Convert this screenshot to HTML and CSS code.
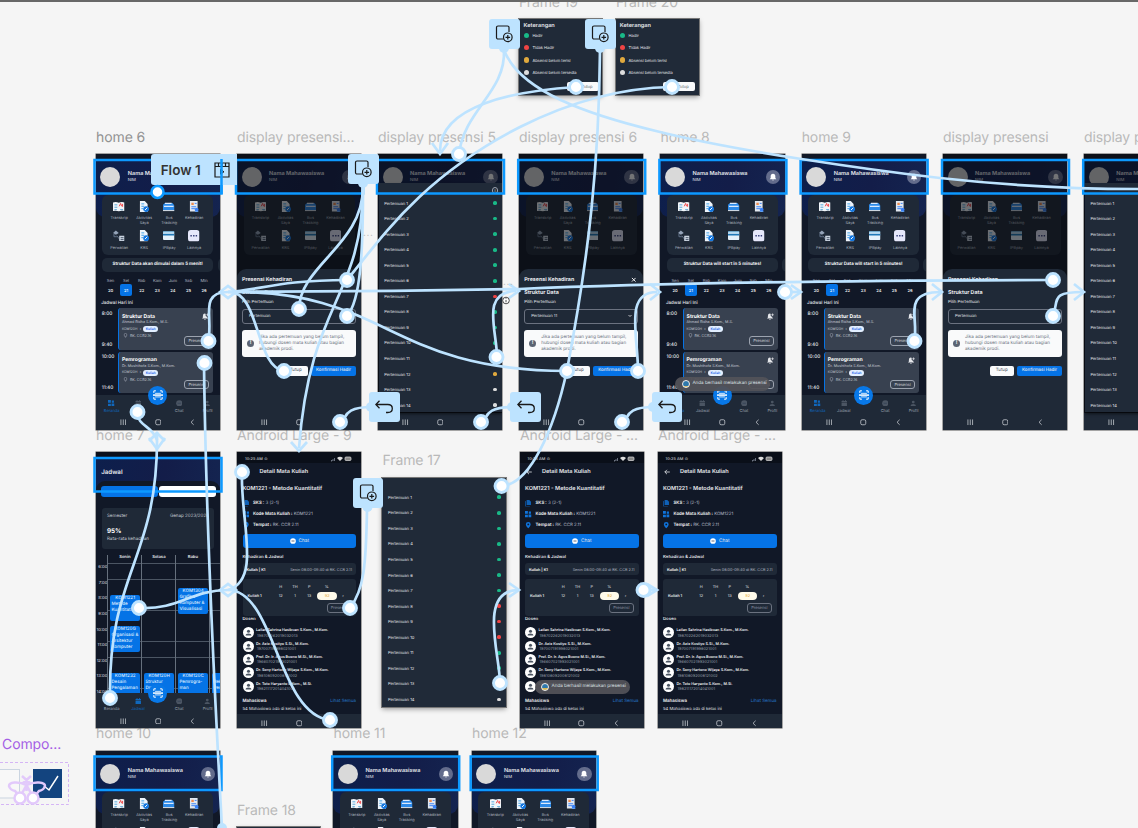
FILE: index.html
```html
<!DOCTYPE html>
<html lang="id">
<head>
<meta charset="utf-8">
<title>Prototype canvas</title>
<link rel="stylesheet" href="styles.css">
</head>
<body>
<svg class="defs" width="0" height="0">
  <symbol id="i-book" viewBox="0 0 12 12"><path d="M0 1.5q3-1 6 .3 3-1.300 6-.3v9q-3-1-6 .3-3-1.300-6-.3z" fill="#f1f5f9"/><path d="M1.500 4h3M1.500 6.500h3M1.500 9h2.500M7.500 9h3" stroke="#55a5d8"/><path d="M6.500 5.500 8 2.500l1 3M10 3v3" stroke="#ef4444" fill="none"/></symbol>
  <symbol id="i-doc" viewBox="0 0 12 12"><path d="M2 0h5l3 3v9H2z" fill="#eef4fb"/><path d="M3.500 3h3M3.500 5.500h3M3.500 8h2" stroke="#3b9fe8"/><circle cx="8.500" cy="8.500" r="3" fill="#1477e0"/><path d="m7.200 9.500 2.500-2.500" stroke="#fff"/></symbol>
  <symbol id="i-bus" viewBox="0 0 12 12"><path d="M2 2h8l2 3v5H0V4z" fill="#2d8ae8"/><path d="M1 5.500h10M2 2.500h7" stroke="#dbeafe" stroke-width="1.300"/><path d="M0 10h12" stroke="#e5e7eb"/></symbol>
  <symbol id="i-list" viewBox="0 0 12 12"><path d="M2 0h8v11H2z" fill="#e2e8f0"/><path d="M3.500 3h2.500" stroke="#ef8a4c" stroke-width="2.500"/><path d="M7 2.500h2M3.500 6h5M3.500 8h4" stroke="#3b82f6"/><circle cx="9" cy="9" r="2" fill="#3b82f6"/><path d="M6 12q3-3 6 0z" fill="#60a5fa"/></symbol>
  <symbol id="i-guide" viewBox="0 0 12 12"><path d="M0 3 3 .5 6 3 3 5z" fill="#94a3b8"/><path d="M1 4v3h3M4 6l4 5" stroke="#64748b" fill="none"/><path d="M6.500 6H12v5.500H6.500z" fill="#cbd5e1"/><path d="M8 8h3M8 10h3" stroke="#475569"/></symbol>
  <symbol id="i-card" viewBox="0 0 12 12"><rect y="1.500" width="12" height="9" rx="1" fill="#e5f1fb"/><path d="M0 4.800h12" stroke="#1f78b8" stroke-width="2"/><path d="M0 2h12" stroke="#68bdee"/></symbol>
  <symbol id="i-more" viewBox="0 0 12 12"><rect width="12" height="12" rx="3" fill="#e6e8fb"/><path d="M2.500 6h1.500M5.300 6h1.500M8 6h1.500" stroke="#343c78" stroke-width="1.500"/></symbol>
  <symbol id="i-bell" viewBox="0 0 12 12"><path d="M6 1q3.500 0 3.500 4v2.500L11 9.500H1l1.500-2V5Q2.500 1 6 1z" fill="currentColor"/><path d="M4.500 10h3v1h-3z" fill="currentColor"/></symbol>
  <symbol id="i-ring" viewBox="0 0 12 12"><path d="M5 1q1 0 1.500.5Q5 5 9 6.500v1l1.500 2H0l1.500-2V5Q1.500 1 5 1zM3.500 10.200h3v1h-3z" fill="#e5e7eb"/><path d="M9.500.8v4.400M7.300 3h4.400" stroke="#e5e7eb" stroke-width="1.200"/></symbol>
  <symbol id="i-scan" viewBox="0 0 12 12"><path d="M1 3.500V1h2.500M8.500 1H11v2.500M11 8.500V11H8.500M3.500 11H1V8.500" fill="none" stroke="#fff" stroke-width="1.200"/><path d="M2.500 4h7M2.500 8.300h7" stroke="#fff"/><path d="M0 6.100h12" stroke="#fff" stroke-width="1.800"/></symbol>
  <symbol id="i-user" viewBox="0 0 12 12"><circle cx="6" cy="3.800" r="2.600" fill="currentColor"/><path d="M1 11q0-3.500 5-3.500t5 3.500z" fill="currentColor"/></symbol>
  <symbol id="i-grid" viewBox="0 0 12 12"><path d="M0 0h5.300v5.300H0zM7 1h4v4H7zM0 7h5.300v5H0zM6.500 6.500H12V12H6.500z" fill="currentColor"/></symbol>
  <symbol id="i-cal" viewBox="0 0 12 12"><path d="M1 2h2V0h1.500v2h3V0H9v2h2v2H1zM1 5h10v7H1z" fill="currentColor"/></symbol>
  <symbol id="i-file" viewBox="0 0 12 12"><path d="M3 0h5l3 3v6H3z" fill="currentColor" opacity=".8"/><path d="M1 2v10h8" fill="none" stroke="currentColor" stroke-width="1.500" opacity=".7"/></symbol>
  <symbol id="i-chat" viewBox="0 0 12 12"><circle cx="6" cy="6" r="5.700" fill="currentColor"/><path d="M3 6h6" stroke="#334155" stroke-width="1.500"/></symbol>
  <symbol id="i-pin" viewBox="0 0 12 12"><path d="M6 12Q1.500 7 1.500 4.500a4.500 4.500 0 0 1 9 0Q10.500 7 6 12z" fill="currentColor"/><circle cx="6" cy="4.500" r="1.700" fill="#111827"/></symbol>
  <symbol id="i-overlay" viewBox="0 0 18 18"><path d="M8.500 14H3a1.500 1.500 0 0 1-1.500-1.500V2.500A1.500 1.500 0 0 1 3 1h9.500A1.500 1.500 0 0 1 14 2.500V7" fill="none" stroke="#1a1a1a" stroke-width="1.200"/><circle cx="12.800" cy="12.300" r="4.300" fill="#bde3ff" stroke="#1a1a1a" stroke-width="1.200"/><path d="M12.800 10v4.600M10.500 12.300h4.600" stroke="#1a1a1a" stroke-width="1.200"/></symbol>
  <symbol id="i-back" viewBox="0 0 18 14"><path d="M4.500.8.800 4.500l3.700 3.700M.8 4.500h12q4.500 0 4.500 4t-4.500 4H11" fill="none" stroke="#1a1a1a" stroke-width="1.300"/></symbol>
  <symbol id="i-flow" viewBox="0 0 16 16"><path d="M1 1h14v14H1zM1 4.500h14M4.500 1v3.500M8 1v3.500M11.500 1v3.500" fill="none" stroke="#1a1a1a" stroke-width="1.200"/><path d="M6.500 7.500 10 9.800l-3.500 2.300z" fill="none" stroke="#1a1a1a"/></symbol>
</svg>
<main class="canvas" id="canvas"></main>
<script src="app.js"></script>
</body>
</html>
```

FILE: styles.css
```css
* { box-sizing: border-box; }
body { margin: 0; overflow: hidden; background: #f5f5f5; font-family: Inter, "Noto Sans", sans-serif; }
.defs { position: absolute; }
.canvas { position: relative; width: 1138px; height: 828px; overflow: hidden; }
.topbar { position: absolute; left: 0; top: 0; width: 100%; height: 2px; background: #686868; }
.label { position: absolute; height: 18px; line-height: 18px; font-size: 14px; letter-spacing: -.1px; color: #b9b9b9; white-space: nowrap; text-rendering: geometricPrecision; }
.label.strong { color: #929292; }
.label.purple { color: #a45ee5; }

/* Device frames */
.frame { position: absolute; width: 124.300px; height: 276px; overflow: hidden; background: #111827; color: #e5e7eb; font-size: 4.200px; line-height: 5px; box-shadow: 0 0 0 .5px #555; text-rendering: geometricPrecision; }
.frame svg, .frame i { display: block; flex: none; }
.body { position: relative; height: 241px; overflow: hidden; }
.navy { position: absolute; left: 0; top: 5px; width: 100%; height: 58px; border-radius: 0 0 9px 9px; background: linear-gradient(100deg, #0d1f4c, #131d49 55%, #142450); }
.stack { position: relative; }
.head { display: flex; height: 41.300px; padding: 13px 4.500px 0; }
.avatar { width: 20px; height: 20px; border-radius: 50%; background: #d9d9d9; }
.who { flex: 1; padding: 3.700px 0 0 7.600px; font-size: 4.200px; line-height: 8.500px; }
.who b { display: block; font: 600 5.550px/6px Inter; white-space: nowrap; }
.bell { display: grid; place-items: center; width: 14.500px; height: 14.500px; margin-top: 2.600px; border-radius: 50%; background: #636c8c; color: #fff; }
.bell svg { width: 8px; height: 8px; }
.menu { display: grid; grid-template-columns: repeat(4, 25px); grid-template-rows: 29.600px 24px; height: 59.400px; margin: 0 6.700px; padding: 5.500px 0 0 4.300px; border-radius: 6px; background: #1f2937; }
.menu div { display: flex; flex-direction: column; align-items: center; gap: 3.900px; text-align: center; font-size: 3.900px; line-height: 4.900px; color: #aab1bd; }
.menu svg { width: 11.500px; height: 11.500px; }
.reminders { display: flex; gap: 4.500px; margin: 3.600px 0 0 6.700px; width: 135px; }
.reminders div { flex: 0 0 110.700px; height: 13.400px; border-radius: 5px; background: #1f2937; font-size: 4.450px; font-weight: 700; line-height: 14.400px; text-align: center; color: #f3f4f6; white-space: nowrap; }
.days { display: grid; grid-template-columns: repeat(7, 15.600px); margin: 5.800px 0 0 7px; text-align: center; line-height: 7px; font-size: 4.100px; color: #b9bec8; }
.days b { font-weight: 500; color: #fff; line-height: 13px; height: 12px; }
.days .sel { width: 12px; height: 12px; margin: auto; border-radius: 2px; background: #0573e6; }
.sub { padding-top: 3.300px; height: 12px; margin-left: 5.500px; font-size: 4.500px; font-weight: 500; line-height: 7px; }
.slot { display: flex; height: 41.500px; margin: 0 0 2px 6px; }
.times { display: flex; flex-direction: column; justify-content: space-between; width: 16.200px; padding: 3.200px 0 2px; font-size: 4.800px; font-weight: 500; }
.lesson { position: relative; width: 95.600px; padding: 5.300px 0 0 3px; border-left: 1.300px solid #0573e6; border-radius: 3px; background: #384150; font-size: 3.700px; color: #c3c8d0; }
.lesson b { display: block; font-size: 5.100px; line-height: 6.500px; color: #fff; }
.lesson p { margin: 0; line-height: 4.500px; }
.lesson .code { display: flex; align-items: center; gap: 2px; margin-top: 1.300px; font-size: 3.300px; }
.lesson .code i { width: 15px; height: 6px; border-radius: 3px; background: #e3efff; color: #2563eb; font: 600 3.300px/6px Inter; text-align: center; }
.lesson .room { display: flex; align-items: center; gap: 2px; margin: 1px 0 0 1px; }
.lesson .room svg { width: 5px; height: 5px; color: #6b7280; }
.lesson .ring { position: absolute; right: 4px; top: 5px; }
.lesson .ring svg { width: 7px; height: 7px; }
.ghost { width: 24.500px; height: 9.700px; border: .700px solid #9ca3af; border-radius: 3px; text-align: center; font-size: 4px; line-height: 8.800px; color: #d1d5db; }
.lesson .ghost { position: absolute; right: 4.600px; bottom: 4px; }
.tabs { position: relative; display: grid; grid-template-columns: 28px 24.500px 57px 1px; height: 18px; padding: 4.500px 0 0 2px; background: #1f2937; text-align: center; font-size: 4px; color: #9ca3af; }
.tabs div { display: flex; flex-direction: column; align-items: center; gap: 1.500px; }
.tabs div:nth-child(3) { padding-left: 1px; }
.tabs svg { width: 6.500px; height: 6.500px; color: #4b5563; }
.tabs .on, .tabs .on svg { color: #1068bd; }
.tabs .fab { position: absolute; left: 52.500px; top: -9.500px; width: 19px; height: 19px; border-radius: 50%; background: #0878e8; display: grid; place-items: center; padding: 0; }
.tabs .fab svg { width: 10px; height: 10px; }
.sys { display: flex; justify-content: space-between; align-items: center; height: 17px; padding: 2px 24px 0; background: #1f2937; }
.sys svg { width: 6.500px; height: 6.500px; fill: none; stroke: #d1d5db; stroke-width: .8; }

/* Overlays */
.shade { position: absolute; inset: 0; background: rgba(8, 10, 14, .57); }
.sheet { position: absolute; inset: 114.500px 0 0; border-radius: 9px 9px 0 0; background: #1f2937; padding: 8.500px 5px 0; display: flex; flex-direction: column; }
.sheet h4 { display: flex; justify-content: space-between; margin: 0; font-size: 5.300px; line-height: 7px; }
.sheet h4 svg { width: 5.500px; height: 5.500px; margin-right: 2px; }
.sheet h4 + h4 { margin-top: 6px; }
.sheet p { margin: 2.700px 0 3px; font-size: 4.300px; line-height: 6px; }
.select { display: flex; justify-content: space-between; align-items: center; height: 15px; padding: .5px 5px 0 6px; border: .700px solid #6b7280; border-radius: 3px; }
.select svg { width: 4px; height: 4px; }
.note { display: flex; align-items: center; gap: 5px; height: 27.500px; margin-top: 6px; padding: .7px 0 0 5px; border-radius: 3px; background: #f9fafb; color: #6b7280; font-size: 4.600px; line-height: 5.700px; white-space: nowrap; }
.note i { width: 7px; height: 7px; border-radius: 50%; background: #5b6473; color: #fff; font: 700 5px/7px Inter; text-align: center; }
.actions { display: flex; justify-content: flex-end; gap: 3px; margin-top: 8.700px; font-size: 4.400px; line-height: 10px; text-align: center; }
.actions span { width: 24px; border-radius: 2px; background: #f9fafb; color: #4b5563; }
.actions b { width: 45.600px; border-radius: 2px; background: #0573e6; color: #e5e7eb; font-weight: 500; }
.sheet .sys { margin: auto 0 0; padding: 2px 19px 0; }
.panel { position: absolute; left: .5px; right: .5px; top: 29px; height: 229px; padding: 12.300px 0 0; background: #202a38; box-shadow: 0 2px 3px #0008; font-size: 4.100px; }
.frame.alone { width: 124px; height: 229px; background: #202a38; padding-top: 12px; box-shadow: 0 0 0 1px #777, 0 2px 5px #0006; font-size: 4.100px; }
.item { display: flex; align-items: center; justify-content: space-between; height: 15.550px; padding: 0 5.400px 0 5.700px; }
.panel .item { padding-right: 4.800px; }
.item i { width: 3.700px; height: 3.700px; border-radius: 50%; background: #ddd; }
.panel .info { position: absolute; right: 3.500px; top: 4px; width: 6.500px; height: 6.500px; border: .6px solid #9ca3af; border-radius: 50%; font-size: 4px; text-align: center; }
.item .g { background: #19b987; } .item .r { background: #ef4444; } .item .y { background: #e0a93e; }
.foot { position: absolute; left: 0; right: 0; bottom: 0; }
.toast { position: absolute; left: 15px; width: 95px; height: 14px; border-radius: 7px; background: rgba(82, 82, 88, .94); color: #dfe2e6; font-size: 4.600px; line-height: 14px; display: flex; align-items: center; gap: 2.500px; padding-left: 6.500px; white-space: nowrap; }
.toast i { width: 8px; height: 8px; border-radius: 50%; border: 1.200px solid #eee; background: linear-gradient(#2f78ab 75%, #d8b853 0); }
.t1 { top: 223px; } .t2 { top: 228px; }

/* Detail screen */
.status { display: flex; justify-content: space-between; height: 11px; padding: 4px 9px 0 8px; background: #0a0f19; font-size: 3.900px; letter-spacing: .1px; }
.status svg { width: 22px; height: 6px; }
.bar { display: flex; align-items: center; height: 17px; padding: .7px 0 0 6px; font-size: 5.600px; font-weight: 600; }
.bar svg { width: 6px; height: 6px; margin-right: 10.500px; }
.detail { height: 233.500px; padding: 6px 5.200px 0 5.500px; font-size: 4.200px; }
.detail h3 { margin: 0 0 5px; font-size: 5.550px; font-weight: 600; line-height: 7px; white-space: nowrap; }
.fact { display: flex; align-items: center; gap: 4px; height: 10.800px; font-size: 4.400px; color: #b6bcc7; }
.fact b { font-weight: 600; color: #f3f4f6; }
.fact svg { width: 6.500px; height: 6.500px; color: #0f73db; }
.chat { display: flex; justify-content: center; align-items: center; gap: 3px; height: 14px; margin-top: 3.500px; border-radius: 3px; background: #0573e6; font-size: 4.800px; }
.chat svg { width: 6px; height: 6px; color: #fff; }
.detail h5 { margin: 7px 0 2.500px; font-size: 4.300px; font-weight: 600; line-height: 5px; }
.when { display: flex; justify-content: space-between; height: 12.700px; padding: 0 4px; border-radius: 3px; background: #1f2937; line-height: 13.500px; font-size: 3.800px; color: #b4bac5; }
.when b { color: #fff; font-weight: 600; }
.att { height: 37.500px; margin-top: 3.300px; padding: 3.300px 5px 0; border-radius: 3px; background: #1f2937; }
.att .row { display: grid; grid-template-columns: 26px 14.300px 14.300px 14.300px 20.500px 12px; line-height: 9.500px; text-align: center; font-size: 3.900px; white-space: nowrap; }
.att .row span:first-child { text-align: left; font-weight: 600; }
.att .pct { height: 7.600px; line-height: 7.600px; margin: 1px 0 1px 1px; border-radius: 4px; background: #fffbea; color: #e4a52a; }
.att .ghost { margin: 2px 0 0 79px; color: #8b93a1; border-color: #6b7280; }
.detail h5.d { margin: 0 0 4px; padding-top: 1px; }
.person { display: flex; align-items: center; gap: 2.500px; height: 13.300px; white-space: nowrap; font-size: 3.900px; line-height: 5.500px; color: #9ca3af; }
.person i { display: grid; place-items: center; width: 11px; height: 11px; border-radius: 50%; background: #fff; color: #4b5563; }
.person svg { width: 7px; height: 7px; }
.person b { display: block; color: #eceef1; font-size: 3.700px; font-weight: 600; }
.person .id { padding-left: 1px; display: block; }
.more { display: flex; justify-content: space-between; margin: 6.500px 0 2.500px; font-size: 4.400px; color: #f3f4f6; font-weight: 600; }
.more span { color: #2369b5; font-weight: 500; }

/* Schedule screen */
.sched { background: #111827; }
.top7 { height: 38px; padding: 12px 0 0 5.500px; background: linear-gradient(100deg, #0d1f4c, #131d49 55%, #142450); border-top: 5px solid #0b101c; font-size: 6.200px; font-weight: 600; line-height: 7px; }
.round7 { position: relative; margin-top: -9.500px; height: 212.500px; border-radius: 9px 9px 0 0; background: #111827; padding-top: 5px; }
.seg { display: flex; gap: 1.500px; height: 11px; margin: 0 4.500px 0 5.500px; }
.seg i { flex: 1; border-radius: 3px; background: #0573e6; }
.seg i + i { background: #fff; }
.sem { height: 41px; margin: 11.500px 6px 0 6.300px; padding: 5.500px 5px; border-radius: 3px; background: #1f2937; color: #c6cbd3; font-size: 4.500px; }
.sem div { display: flex; justify-content: space-between; }
.sem b { display: block; margin: 8.500px 0 2px; color: #fff; font-size: 6.300px; line-height: 8px; }
.grid7 { display: grid; grid-template-columns: 11.700px repeat(4, 34px); margin-top: 5.500px; height: 139px; }
.col { position: relative; border-left: .7px solid #66707d; background: repeating-linear-gradient(transparent 0 8.300px, #4b5563 8.300px 9px, transparent 9px 15.600px); text-align: center; font-weight: 600; line-height: 6.500px; }
.hours { padding-top: 5.500px; font-size: 4.200px; line-height: 15.600px; text-align: right; }
.ev { position: absolute; left: 2px; width: 29.500px; height: 26px; padding: 1.500px 1px; border-radius: 2px; background: #0573e6; color: #dbeafe; text-align: left; font-weight: 500; font-size: 4.500px; line-height: 6px; }
.ev span { display: block; text-align: center; }

/* Legend frames */
.frame.legend { width: 83px; height: 76px; padding: 4px 4.300px; background: #202a38; box-shadow: 0 0 0 1px #777, 0 2px 5px #0006; font-size: 4px; }
.legend b { display: block; height: 6px; font-size: 5.600px; line-height: 6px; font-weight: 600; margin-bottom: .3px; }
.legend .item { justify-content: flex-start; gap: 3.500px; height: 12.300px; padding: 0; }
.legend .item i { width: 5.300px; height: 5.300px; }
.legend .close { width: 32px; height: 9px; margin: 4px -1px 0 auto; border-radius: 2px; background: #f9fafb; color: #4b5563; line-height: 9px; text-align: center; padding-left: 8px; }

/* Prototype layer */
.wires { position: absolute; left: 0; top: 0; }
.outline { fill: none; stroke: #0d99ff; stroke-width: 2.500; }
.wire { fill: none; stroke: #bde3ff; stroke-width: 2.700; }
.knob { fill: #fff; stroke: #bde3ff; stroke-width: 2.900; }
.tag { position: absolute; display: grid; place-items: center; width: 30.500px; height: 30px; border-radius: 3px; background: #bde3ff; }
.tag svg { width: 18px; height: 18px; }
.flow { position: absolute; left: 150.700px; top: 154px; width: 86px; height: 31px; display: flex; align-items: center; gap: 13px; padding-left: 10px; border-radius: 3px 0 0 3px; background: #bde3ff; color: #333; font-size: 13.500px; font-weight: 600; white-space: nowrap; }
.flow svg { width: 16px; height: 16px; flex: none; }
.dots { position: absolute; font-size: 10px; line-height: 10px; letter-spacing: .6px; color: #bbb; }
```

FILE: app.js
```javascript
const icon = (n) => `<svg><use href="#i-${n}"/></svg>`;
const sys = `<div class="sys"><svg viewBox="0 0 7 7"><path d="M1 .5v6M3.500 .5v6M6 .5v6"/></svg><svg viewBox="0 0 7 7"><rect x=".8" y=".8" width="5.400" height="5.400" rx="1.500"/></svg><svg viewBox="0 0 7 7"><path d="M5 .8 2.200 3.500 5 6.200"/></svg></div>`;
const tabs = (on) => `<div class="tabs">${[['grid', 'Beranda'], ['cal', 'Jadwal'], ['chat', 'Chat'], ['user', 'Profil']]
  .map(([i, t], k) => `<div class="${k === on ? 'on' : ''}">${icon(i)}${t}</div>`).join('')}<div class="fab">${icon('scan')}</div></div>`;
const head = `<div class="head"><i class="avatar"></i><div class="who"><b>Nama Mahawasiswa</b>NIM</div><div class="bell">${icon('bell')}</div></div>`;
const menu = `<div class="menu">${[['book', 'Transkrip'], ['doc', 'Aktivitas<br>Saya'], ['bus', 'Bus<br>Tracking'], ['list', 'Kehadiran'], ['guide', 'Perwalian'], ['doc', 'KRS'], ['card', 'IPBpay'], ['more', 'Lainnya']]
  .map(([i, t]) => `<div>${icon(i)}<span>${t}</span></div>`).join('')}</div>`;
const days = `<div class="days">${['Sen', 'Sel', 'Rab', 'Kam', 'Jum', 'Sab', 'Min'].map((d) => `<span>${d}</span>`).join('')}${[20, 21, 22, 23, 24, 25, 26]
  .map((d) => `<b class="${d === 21 ? 'sel' : ''}">${d}</b>`).join('')}</div>`;
const lesson = (from, to, title, by) => `<div class="slot"><div class="times"><span>${from}</span><span>${to}</span></div><div class="lesson"><b>${title}</b><p>${by}</p><div class="code">KOM120H <span>•</span><i>Kuliah</i></div><div class="room">${icon('pin')}RK. CCR2.16</div><div class="ring">${icon('ring')}</div><div class="ghost">Presensi</div></div></div>`;

const screen = (content) => `<div class="body"><div class="navy"></div><div class="stack">${content}</div></div>`;
const home = (msg) => `${screen(`${head}${menu}<div class="reminders"><div>${msg}</div><div></div></div>${days}<div class="sub">Jadwal Hari Ini</div>${lesson('8:00', '9:40', 'Struktur Data', 'Ahmad Ridha S.Kom., M.S.')}${lesson('10:00', '11:40', 'Pemrograman', 'Dr. Mushthofa S.Kom., M.Kom.')}`)}${tabs(0)}${sys}`;
const toast = (c) => `<div class="toast ${c}"><i></i>Anda berhasil melakukan presensi</div>`;
const cross = '<svg viewBox="0 0 6 6"><path d="m1 1 4 4M5 1 1 5" stroke="#fff"/></svg>';
const caret = '<svg viewBox="0 0 4 4"><path d="m.5 1 1.500 1.500L3.500 1" fill="none" stroke="#fff" stroke-width=".7"/></svg>';
const presensi = (value, extra = '') => `${screen(head + menu)}<div class="shade"></div><div class="sheet"><h4>Presensi Kehadiran${extra}</h4><h4>Struktur Data</h4><p>Pilih Pertemuan</p><div class="select">${value}${caret}</div><div class="note"><i>!</i><div>Jika ada pertemuan yang belum tampil,<br>hubungi dosen mata kuliah atau bagian<br>akademik prodi.</div></div><div class="actions"><span>Tutup</span><b>Konfirmasi Hadir</b></div>${sys}</div>`;
const items = (colors) => [...colors].map((c, k) => `<div class="item">Pertemuan ${k + 1}<i class="${c}"></i></div>`).join('');
const picker = (colors) => `${screen(head)}<div class="shade"></div><div class="foot">${sys}</div><div class="panel"><span class="info">i</span>${items(colors)}</div>`;

const people = [['Lailan Sahrina Hasibuan S.Kom., M.Kom.', '198702262019032013'], ['Dr. Aziz Kustiyo S.Si., M.Kom.', '197007191998021001'], ['Prof. Dr. Ir. Agus Buono M.Si., M.Kom.', '196607021993021001'], ['Dr. Sony Hartono Wijaya S.Kom., M.Kom.', '198108092008121002'], ['Dr. Toto Haryanto S.Kom., M.Si.', '198211172014041001']];
const row = (c, last) => `<div class="row">${c.map((t) => `<span>${t}</span>`).join('')}${last}</div>`;
const status = `<div class="status"><span>10:25 AM ⊙</span><svg viewBox="0 0 22 6"><path d="M1 5h1V4zM3 5V3M4.500 5V2" stroke="#6b7280" fill="none"/><path d="M7 2q3-2.500 6 0L10 5z" fill="#ddd"/><rect x="15" y="1" width="6" height="3.500" rx="1" stroke="#ddd" fill="#888" stroke-width=".7"/></svg></div>`;
const detail = `${status}<div class="bar"><svg viewBox="0 0 6 6"><path d="M3 .8.800 3 3 5.200M.8 3h5" fill="none" stroke="#e5e7eb" stroke-width=".8"/></svg>Detail Mata Kuliah</div><div class="detail"><h3>KOM1221 - Metode Kuantitatif</h3>
<div class="fact">${icon('file')}<span><b>SKS :</b> 3 (2-1)</span></div><div class="fact">${icon('grid')}<span><b>Kode Mata Kuliah :</b> KOM1221</span></div><div class="fact">${icon('pin')}<span><b>Tempat :</b> RK. CCR 2.11</span></div>
<div class="chat">${icon('chat')}Chat</div><h5>Kehadiran &amp; Jadwal</h5><div class="when"><b>Kuliah | K1</b>Senin 08:00-09:40 di RK. CCR 2.11</div>
<div class="att">${row(['', 'H', 'TH', 'P', '%'], '')}${row(['Kuliah 1', '12', '1', '13'], '<span class="pct">92</span><span>›</span>')}<div class="ghost">Presensi</div></div><h5 class="d">Dosen</h5>
${people.map(([n, id]) => `<div class="person"><i>${icon('user')}</i><div><b>${n}</b><span class="id">${id}</span></div></div>`).join('')}<div class="more">Mahasiswa<span>Lihat Semua</span></div>54 Mahasiswa ada di kelas ini</div>${sys}`;

const ev = (top, code, text) => `<div class="ev" style="top:${top}px"><span>${code}</span>${text}</div>`;
const schedule = `<div class="body sched"><div class="top7">Jadwal</div><div class="round7"><div class="seg"><i></i><i></i></div><div class="sem"><div><span>Semester</span><span>Genap 2023/2024</span></div><b>95%</b><div><span>Rata-rata kehadiran</span><span>›</span></div></div>
<div class="grid7"><div class="hours">${[6, 7, 8, 9, 10, 11, 12, 13, 14].map((h) => `<div>${h}:00</div>`).join('')}</div><div class="col">Senin${ev(40, 'KOM1221', 'Metode Kuantitatif')}${ev(71, 'KOM120G', 'Organisasi &amp; Arsitektur Komputer')}${ev(118, 'KOM1232', 'Desain Pengalaman')}</div><div class="col">Selasa${ev(118, 'KOM120H', 'Struktur Data')}</div><div class="col">Rabu${ev(33, 'KOM1304', 'Grafika Komputer &amp; Visualisasi')}${ev(118, 'KOM120C', 'Pemrogra-<br>man')}</div><div class="col">Kamis${ev(118, 'KOM', 'Rekayasa Perangkat')}</div></div></div></div>${tabs(1)}${sys}`;
const legend = `<b>Keterangan</b>${[['g', 'Hadir'], ['r', 'Tidak Hadir'], ['y', 'Absensi belum terisi'], ['', 'Absensi belum tersedia']].map(([c, t]) => `<div class="item"><i class="${c}"></i>${t}</div>`).join('')}<div class="close">Tutup</div>`;

const soon = 'Struktur Data will start in 5 minutes!';
const frames = [
  [95.700, 154, home('Struktur Data akan dimulai dalam 5 menit!')],
  [237, 154, presensi('Pertemuan')],
  [378, 154, picker('ggggggrggggy  ')],
  [519.200, 154, presensi('Pertemuan 11', cross)],
  [660.400, 154, home(soon) + toast('t1')],
  [801.600, 154, home(soon)],
  [943, 154, presensi('Pertemuan')],
  [1084.200, 154, picker('ggggggrggggy  ')],
  [95.700, 452.300, schedule],
  [237, 452.300, detail],
  [382.300, 477.500, items('gggggggrrrgg  '), 'alone'],
  [519.500, 452.300, detail + toast('t2')],
  [657.500, 452.300, detail],
  [95.700, 751, home(soon)],
  [333.300, 751, home(soon)],
  [471.800, 751, home(soon)],
  [237, 827, '', 'legend'],
  [519.300, 19, legend, 'legend'],
  [615.500, 19, legend, 'legend'],
].map(([x, y, html, c = '']) => `<section class="frame ${c}" style="left:${x}px;top:${y}px">${html}</section>`).join('');

const labels = [
  ['home 6', 96, 138, 'strong'], ['display presensi...', 237, 138], ['display presensi 5', 378, 138], ['display presensi 6', 519, 138],
  ['home 8', 660.500, 138], ['home 9', 801.700, 138], ['display presensi', 943, 138], ['display presensi 2', 1084, 138],
  ['home 7', 96, 436], ['Android Large - 9', 237, 436], ['Frame 17', 382.500, 461], ['Android Large - ...', 520, 436], ['Android Large - ...', 658, 436],
  ['home 10', 96, 734], ['home 11', 333.500, 734], ['home 12', 472, 734], ['Frame 18', 237, 811], ['Frame 19', 519, 3], ['Frame 20', 616, 3], ['Compo...', 2, 745, 'purple'],
].map(([t, x, y, c = '']) => `<div class="label ${c}" style="left:${x}px;top:${y - 9}px">${t}</div>`).join('');

const outlines = [[94.500, 160], [236, 160], [377, 160], [518.200, 160], [659.400, 160], [800.600, 160], [942, 160], [1083.200, 160], [94.500, 458], [94.500, 756.500], [332.200, 756.500], [470.700, 756.500]]
  .map(([x, y]) => `<rect class="outline" x="${x}" y="${y}" width="127" height="33.500"/>`).join('');

const wires = [
  'M504 50C506 92 464 110 459 154', 'M576 87C515 91 440 105 440 151', 'M504 50C520 92 590 115 656 131C735 151 870 170 940 178Q1040 189 1138 189',
  'M672 87C600 88 540 117 520 127C420 178 380 240 347 280', 'M600 50C599 160 590 250 567 370C554 430 530 485 501 486',
  'M363 187C363 245 300 265 299 309', 'M363 187C363 250 361 300 347 316', 'M363 187C362 300 310 300 299 448',
  'M228 292C260 290 280 280 347 280', 'M236 291.500C380 292 470 290 519 289Q700 281 1053 280', 'M228 292C390 290 385 370 567 371', 'M228 292C260 290 255 367 284 371',
  'M208 341C214 320 198 292 228 292', 'M497 357C497 330 480 292 516 291', 'M638 371C638 335 624 292 657 292', 'M785 292H800', 'M914 341C920 320 900 292 941 292', 'M1053 316C1059 300 1050 292 1083 292',
  'M137 412C138 427 152 425 157 440', 'M157 432C159 560 108 570 110 698', 'M204 363Q206 540 222 828', 'M139 608C180 610 190 590 228 590', 'M228 590C262 580 240 520 242 472', 'M228 590C275 590 278 715 330 720',
  'M367 510C366 565 364 590 350 608', 'M500 683C500 655 478 592 517 590', 'M643 590H656',
  'M340 422C348 420 340 407 372 407', 'M481 422C489 420 481 407 513 407', 'M622 422C630 420 622 407 654 407',
  'M432 143l8 11 8-11', 'M291 442l8 9 8-9', 'M509 284l10 7-10 7', 'M650 284l10 8-10 8', 'M791 285l10 7-10 7', 'M932 284l10 8-10 8', 'M1074 284l10 8-10 8', 'M509 583l10 7-10 7', 'M647 584l10 6-10 6',
  'M220 292l8-6 8 6-8 6z', 'M220 590l8-6 8 6-8 6z', 'M149 441l8-8 8 8M149 438l8 11 8-11',
].map((d) => `<path class="wire" d="${d}"/>`).join('');
const knobs = [[576, 87], [672, 87], [459, 154], [347, 280], [347, 316], [299, 309], [284, 371], [208.500, 341], [204.500, 363], [137.500, 412], [340, 422], [481, 422], [622, 422], [496.500, 357], [567, 371], [638, 371], [785, 292], [914.500, 341], [1053, 280], [1053, 316], [242, 472], [110, 698], [139, 608], [330, 720], [350, 608], [501.500, 486], [500, 683], [643.500, 590]]
  .map(([x, y]) => `<circle class="knob" cx="${x}" cy="${y}" r="6.500"/>`).join('');
const nubs = [[504, 48], [600, 48], [363, 183], [367.500, 507], [371, 407], [512, 407], [653, 407], [222, 828]].map(([x, y]) => `<circle cx="${x}" cy="${y}" r="5" fill="#bde3ff"/>`).join('');
const component = `<rect x="-5" y="762.500" width="73.500" height="42" fill="none" stroke="#d5b5f5" stroke-dasharray="3 2"/><rect x="-8" y="769.500" width="27.500" height="28.500" fill="#f8f8f8" stroke="#cbd5e1"/><rect x="33" y="769" width="29" height="29" fill="#13447f"/><path d="m44 786 5 4 9-14" fill="none" stroke="#fff" stroke-width="1.500"/><g fill="none" stroke="#e2c9fb" stroke-width="2.500"><path d="M26.500 785C18 781 9 782 9 786q1 4 6 5l5 6M26.500 785C35 781 45 782 45 786q-1 4-6 5l-5 6M26.500 779v12M22 776l9 8M31 776l-9 8M20 797l6.500-12 6.500 12"/><circle cx="20" cy="798" r="5.500" fill="#fff"/><circle cx="33" cy="798" r="5.500" fill="#fff"/></g>`;
const tag = (x, y, n) => `<div class="tag" style="left:${x}px;top:${y}px">${icon(n)}</div>`;

document.getElementById('canvas').innerHTML = `${labels}${frames}
<svg class="wires" width="1138" height="828">${outlines}</svg>
<div class="flow">Flow 1${icon('flow')}</div>
<svg class="wires" width="1138" height="828"><path class="outline" d="M221.500 159v35"/>${nubs}${wires}${knobs}<circle cx="157.500" cy="192" r="6" fill="#fff" stroke="#0d99ff" stroke-width="2.500"/>${component}<circle cx="506" cy="300.500" r="3.300" fill="#fff" stroke="#222" stroke-width=".8"/><path d="M506 300v2.300M506 298.300v.8" stroke="#222" stroke-width=".8"/></svg>
${tag(489, 19, 'overlay')}${tag(585, 19, 'overlay')}${tag(348, 154, 'overlay')}${tag(352.500, 477.500, 'overlay')}${tag(369, 392, 'back')}${tag(510.300, 392, 'back')}${tag(651.500, 392, 'back')}
<span class="dots" style="left:363px;top:227px">...</span><span class="dots" style="left:503px;top:276px">...</span><div class="topbar"></div>`;
```
